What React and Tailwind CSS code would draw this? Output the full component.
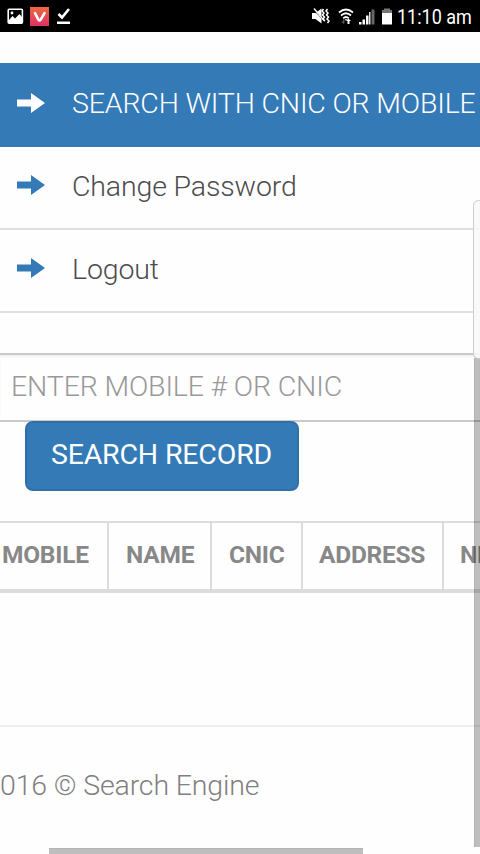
const ArrowIcon = () => (
  <svg viewBox="0 0 30 22" className="h-[22px] w-[30px] shrink-0" fill="currentColor">
    <path d="M1 7.500h14V1l14 10-14 10v-6.500H1z" />
  </svg>
);

function StatusBar() {
  return (
    <header className="flex h-8 shrink-0 items-center bg-black text-white">
      <svg viewBox="0 0 72 32" className="h-8 w-[72px]">
        <rect x="8.200" y="9.200" width="14.200" height="14" rx="1" fill="none" stroke="#fff" strokeWidth="1.600" />
        <circle cx="12" cy="13" r="1.400" fill="#fff" />
        <path d="M9 20l3.500-4 2.500 2.500 4.500-4.500 2.500 3v6H9z" fill="#fff" />
        <defs>
          <linearGradient id="badge" x1="0" y1="0" x2="0" y2="1">
            <stop offset="0" stopColor="#ed6a3c" />
            <stop offset="1" stopColor="#df2f68" />
          </linearGradient>
        </defs>
        <rect x="30" y="7" width="19" height="19" fill="url(#badge)" />
        <path d="M35 13.200l3.500 6.600q1 1.400 2 0l4-6.600" fill="none" stroke="#fff" strokeWidth="2.600" strokeLinecap="round" strokeLinejoin="round" />
        <path d="M58.500 14l3.500 3.500 7-8.500" fill="none" stroke="#fff" strokeWidth="2.600" />
        <path d="M57 21.500h13v2.500H57z" fill="#fff" />
      </svg>
      <svg viewBox="308 0 88 32" className="ml-auto h-8 w-[88px]">
        <path d="M312 13h3.500l6-4.500v15L315.500 19H312z" fill="#fff" />
        <path d="M313 8.500l14 15" stroke="#000" strokeWidth="1.200" />
        <path d="M314 8.500l10.500 12.500" stroke="#fff" strokeWidth="1.300" />
        <path d="M323.500 9l-1.500 2 2 2-1.500 2 2 2-1.500 2 2 2M327.500 9l-1.500 2 2 2-1.500 2 2 2-1.500 2 2 2-1.500 2" fill="none" stroke="#fff" strokeWidth="1.500" />
        <path d="M339 12.500q7-6 14 0M341 15.500q5-4.500 10 0M343.200 18.300q2.800-2.600 5.600 0" fill="none" stroke="#fff" strokeWidth="1.700" />
        <path d="M345 19h2l-1 2z" fill="#fff" />
        <path d="M343 19.500v2h-2l2.500 2.500 1-1v-3.500z" fill="#555" />
        <path d="M348.500 18.500l2.500 2.500h-1.500v3h-2v-3H346z" fill="#fff" />
        <path d="M359 22h2.500v2.500H359zM362.500 19.500h2.500v5h-2.500zM366 15.500h2.500v9H366z" fill="#fff" />
        <path d="M369 12h1.500v12.500H369z" fill="#ddd" />
        <path d="M371.500 9.500h3v15h-3z" fill="#666" />
        <path d="M384 8.500h6V10h2v4h-10v-4h2z" fill="#777" />
        <path d="M382 13h10v11.500h-10z" fill="#fff" />
      </svg>
      <span className="ml-[1px] mt-[2px] w-[83px] origin-left scale-x-[0.9] whitespace-nowrap text-[20px] font-normal leading-8">11:10 am</span>
    </header>
  );
}

function MenuItem({ label, active }) {
  return (
    <li className={active
      ? "flex h-[84px] items-center bg-[#337ab7] pb-[4px] pl-4 text-white"
      : "flex h-[83px] items-center border-b-2 border-[#dfdfdf] pb-[5px] pl-4 text-[#337ab7]"}>
      <ArrowIcon />
      <span className={active ? "ml-[26px] mt-[3px] whitespace-nowrap text-[28.500px] tracking-[-0.17px]" : "ml-[26px] mt-[4px] whitespace-nowrap text-[28.500px] tracking-[-0.15px] text-[#4c4c4c]"}>{label}</span>
    </li>
  );
}

export default function App() {
  return (
    <div className="relative flex h-[854px] w-[480px] flex-col overflow-hidden bg-[#fefefe] font-['Roboto',sans-serif] font-light">
      <StatusBar />
      <nav className="pt-[31px]">
        <ul>
          <MenuItem label="SEARCH WITH CNIC OR MOBILE" active />
          <MenuItem label="Change Password" />
          <MenuItem label="Logout" />
        </ul>
      </nav>
      <main className="flex flex-col">
        <input
          className="mt-[40px] h-[69px] w-full border-y-2 border-[#c9c9c9] bg-[#fefefe] pb-[3px] pl-[11px] text-[28.500px] tracking-[-0.15px] shadow-[inset_0_2px_2px_#f2f2f2] outline-none placeholder:text-[#999] placeholder:opacity-100"
          placeholder="ENTER MOBILE # OR CNIC"
        />
        <button className="-mt-[1px] ml-[25px] h-[70px] w-[274px] whitespace-nowrap rounded-[8px] border-2 border-[#2f70a9] bg-[#337ab7] pb-[1px] pr-[1px] text-[28.500px] font-normal tracking-[-0.17px] text-white">
          SEARCH RECORD
        </button>
        <div className="mt-[30px] flex h-[72px] w-[600px] border-t-2 border-b-4 border-[#dcdcdc] text-[24.500px] font-bold leading-[64px] tracking-[-0.25px] text-[#888]">
          <div className="w-[109px] shrink-0 border-r-2 border-[#dcdcdc] pl-[2px]">MOBILE</div>
          <div className="w-[103px] shrink-0 border-r-2 border-[#dcdcdc] pl-[17px]">NAME</div>
          <div className="w-[91px] shrink-0 border-r-2 border-[#dcdcdc] pl-[17px]">CNIC</div>
          <div className="w-[141px] shrink-0 border-r-2 border-[#dcdcdc] pl-[16px]">ADDRESS</div>
          <div className="pl-[16px]">NE</div>
        </div>
      </main>
      <footer className="mt-[132px] border-t-2 border-[#eee] pt-[37px] text-[28.500px] leading-[44px] tracking-[-0.15px] text-[#808080]">
        <span className="whitespace-nowrap">016 © Search Engine</span>
      </footer>
      <div className="absolute right-0 top-[358px] h-[489px] w-[6px] border-l border-black/5 bg-black/25" />
      <div className="absolute -right-1 top-[200px] h-[159px] w-[11px] rounded-[6px] border border-[#ccc] bg-[#f8f8f8]/90" />
      <div className="absolute bottom-0 left-[49px] h-[6px] w-[314px] border-t border-black/5 bg-black/25" />
    </div>
  );
}
